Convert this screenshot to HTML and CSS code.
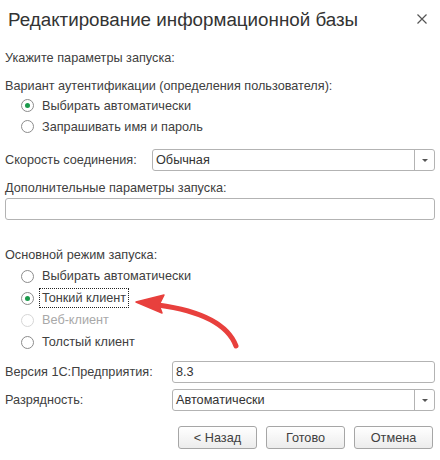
FILE: index.html
```html
<!DOCTYPE html>
<html lang="ru">
<head>
    <meta charset="UTF-8">
    <title>Редактирование информационной базы</title>
    <link rel="stylesheet" href="styles.css">
</head>
<body>
    <div class="dialog">
        <header class="dialog-header">
            <h1 class="dialog-title">Редактирование информационной базы</h1>
            <span class="close">
                <svg width="10" height="10" viewBox="0 0 10 10"><path d="M0.5 0.5 L9.5 9.5 M9.5 0.5 L0.5 9.5" stroke="#555" stroke-width="1.2"/></svg>
            </span>
        </header>

        <div class="dialog-body">
            <div class="text-line hint">Укажите параметры запуска:</div>

            <div class="text-line group-title">Вариант аутентификации (определения пользователя):</div>
            <div class="radio-group auth">
                <label class="radio checked"><span class="radio-box"></span><span class="radio-text">Выбирать автоматически</span></label>
                <label class="radio"><span class="radio-box"></span><span class="radio-text">Запрашивать имя и пароль</span></label>
            </div>

            <div class="field-row speed">
                <span class="field-label label-speed">Скорость соединения:</span>
                <div class="select">
                    <span class="select-value">Обычная</span>
                    <span class="select-button"><span class="triangle"></span></span>
                </div>
            </div>

            <div class="text-line extra-label">Дополнительные параметры запуска:</div>
            <div class="input extra-input"></div>

            <div class="text-line group-title mode-title">Основной режим запуска:</div>
            <div class="radio-group mode">
                <label class="radio"><span class="radio-box"></span><span class="radio-text">Выбирать автоматически</span></label>
                <label class="radio checked"><span class="radio-box"></span><span class="radio-text focused">Тонкий клиент</span></label>
                <label class="radio disabled"><span class="radio-box"></span><span class="radio-text">Веб-клиент</span></label>
                <label class="radio"><span class="radio-box"></span><span class="radio-text">Толстый клиент</span></label>
            </div>

            <div class="field-row version">
                <span class="field-label label-wide">Версия 1С:Предприятия:</span>
                <div class="input"><span class="select-value">8.3</span></div>
            </div>

            <div class="field-row bitness">
                <span class="field-label label-wide">Разрядность:</span>
                <div class="select">
                    <span class="select-value">Автоматически</span>
                    <span class="select-button"><span class="triangle"></span></span>
                </div>
            </div>

            <div class="buttons">
                <button class="btn">&lt; Назад</button>
                <button class="btn">Готово</button>
                <button class="btn">Отмена</button>
            </div>
        </div>

        <!-- red pointer to the thin client option -->
        <svg class="pointer" width="440" height="460" viewBox="0 0 440 460">
            <path d="M236 346 Q224 314 158 305" fill="none" stroke="#e8403d" stroke-width="5" stroke-linecap="round"/>
            <path d="M136 302 L164 295 L159 305 L162 313 Z" fill="#e8403d" stroke="#e8403d" stroke-width="1.5" stroke-linejoin="round"/>
        </svg>
    </div>
</body>
</html>
```

FILE: styles.css
```css
* {
    margin: 0;
    padding: 0;
    box-sizing: border-box;
}
body {
    font-family: 'Liberation Sans', Arial, sans-serif;
    font-size: 12.7px;
    color: #404040;
    background: #fff;
}
.dialog {
    position: relative;
    width: 440px;
    height: 460px;
}
.dialog-header {
    height: 38px;
    display: flex;
    align-items: center;
    justify-content: space-between;
    padding: 0 13px 0 8px;
}
.dialog-title {
    font-size: 18.8px;
    font-weight: normal;
    color: #333;
    padding-top: 2px;
}
.close {
    display: flex;
    width: 10px;
    height: 10px;
}
.dialog-body {
    padding: 0 5px 0 5px;
}
.text-line {
    height: 16px;
    line-height: 16px;
}
.hint {
    margin-top: 12px;
}
.group-title {
    margin-top: 12px;
}
.radio-group {
    display: flex;
    flex-direction: column;
    padding-left: 16px;
}
.auth {
    margin-top: 1px;
}
.auth .radio {
    height: 21px;
}
.radio {
    display: flex;
    align-items: center;
    height: 22px;
}
.radio-box {
    width: 13px;
    height: 13px;
    border: 1px solid #8c8c8c;
    border-radius: 50%;
    background: #fff;
    display: flex;
    align-items: center;
    justify-content: center;
    margin-right: 8px;
}
.radio.checked .radio-box::after {
    content: '';
    width: 5px;
    height: 5px;
    border-radius: 50%;
    background: #1c9a4c;
}
.radio.disabled .radio-box {
    border-color: #d6d6d6;
}
.radio.disabled .radio-text {
    color: #a8a8a8;
}
.radio-text {
    line-height: 16px;
}
.focused {
    outline: 1px dotted #222;
    outline-offset: 1px;
    margin-left: -1px;
    padding: 0 1px;
}
.field-row {
    display: flex;
    align-items: center;
    height: 22px;
}
.field-label {
    flex-shrink: 0;
}
.label-speed {
    width: 147px;
}
.label-wide {
    width: 167px;
}
.speed {
    margin-top: 12px;
}
.select,
.input {
    flex: 1;
    height: 22px;
    border: 1px solid #b3b3b3;
    border-radius: 3px;
    display: flex;
    align-items: center;
    background: #fff;
    color: #333;
}
.select-value {
    flex: 1;
    padding-left: 3px;
}
.select-button {
    width: 20px;
    height: 100%;
    border-left: 1px solid #b3b3b3;
    display: flex;
    align-items: center;
    justify-content: center;
}
.triangle {
    width: 0;
    height: 0;
    border-left: 3px solid transparent;
    border-right: 3px solid transparent;
    border-top: 3px solid #555;
}
.extra-label {
    margin-top: 9px;
}
.extra-input {
    margin-top: 2px;
    height: 22px;
}
.mode-title {
    margin-top: 27px;
}
.mode {
    margin-top: 2px;
}
.version {
    margin-top: 8px;
}
.bitness {
    margin-top: 6px;
}
.buttons {
    display: flex;
    justify-content: flex-end;
    gap: 9px;
    margin-top: 15px;
    padding-right: 2px;
}
.btn {
    width: 79px;
    height: 23px;
    border: 1px solid #a6a6a6;
    border-radius: 3px;
    background: linear-gradient(#ffffff, #ececec);
    font-family: 'Liberation Sans', Arial, sans-serif;
    font-size: 12.7px;
    color: #404040;
}
.pointer {
    position: absolute;
    left: 0;
    top: 0;
    pointer-events: none;
}
```
